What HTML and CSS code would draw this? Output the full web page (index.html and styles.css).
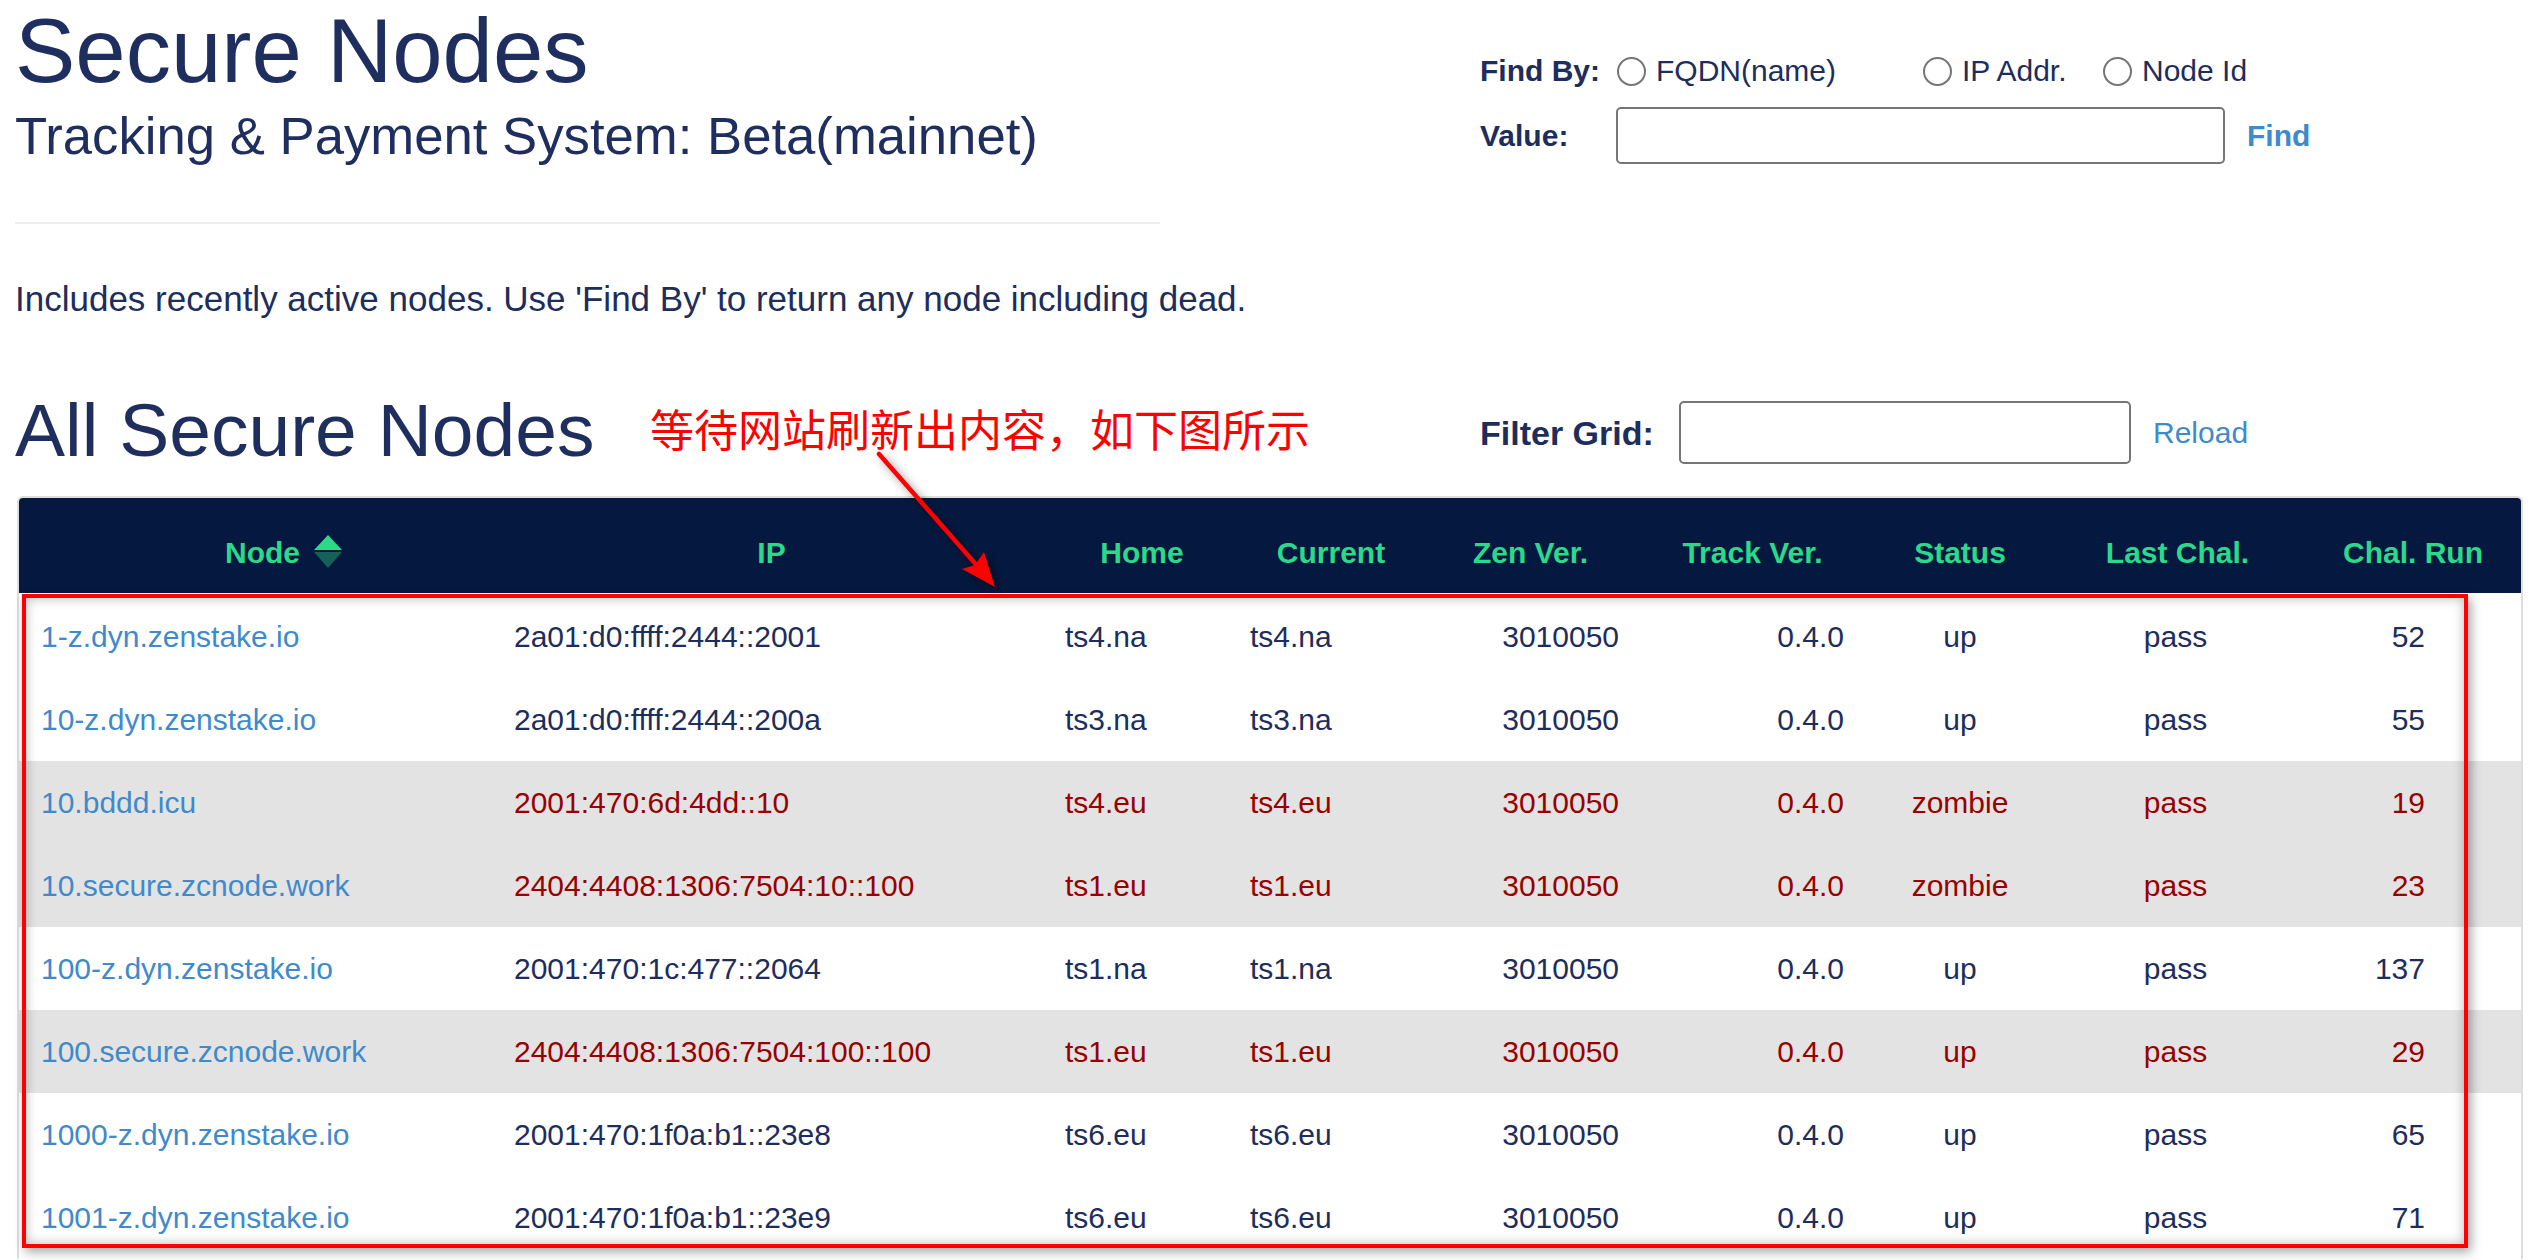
FILE: index.html
```html
<!DOCTYPE html>
<html lang="en">
<head>
<meta charset="utf-8">
<title>Secure Nodes</title>
<link rel="stylesheet" href="styles.css">
</head>
<body>
<div class="page">
  <div class="top">
    <div class="intro">
      <h1 class="title">Secure Nodes</h1>
      <h2 class="subtitle">Tracking &amp; Payment System: Beta(mainnet)</h2>
      <div class="rule"></div>
      <p class="note">Includes recently active nodes. Use 'Find By' to return any node including dead.</p>
    </div>
    <form class="finder">
      <span class="lbl">Find By:</span>
      <div class="opts">
        <label class="opt"><input class="radio" type="radio" name="by"><span>FQDN(name)</span></label>
        <label class="opt"><input class="radio" type="radio" name="by"><span>IP Addr.</span></label>
        <label class="opt"><input class="radio" type="radio" name="by"><span>Node Id</span></label>
      </div>
      <span class="lbl">Value:</span>
      <div class="value-row"><input class="txt txt-value" type="text"><a class="find" href="#">Find</a></div>
    </form>
  </div>

  <div class="section-head">
    <h2 class="section-title">All Secure Nodes</h2>
    <div class="filter">
      <span class="lbl lbl-filter">Filter Grid:</span>
      <input class="txt txt-filter" type="text">
      <a class="reload" href="#">Reload</a>
    </div>
  </div>

  <div class="grid">
    <div class="grid-head cols">
      <div class="hc hc-node"><span class="sortable">Node<svg class="sort-icon" width="28" height="33" viewBox="0 0 28 33"><polygon points="14,0 28,15 0,15" fill="#2bd98a"/><polygon points="0,17 28,17 14,33" fill="#17605a"/></svg></span></div>
      <div class="hc">IP</div>
      <div class="hc">Home</div>
      <div class="hc">Current</div>
      <div class="hc">Zen Ver.</div>
      <div class="hc">Track Ver.</div>
      <div class="hc">Status</div>
      <div class="hc">Last Chal.</div>
      <div class="hc">Chal. Run</div>
    </div>
    <div class="grid-body">
      <div class="row cols">
        <div class="c c-node"><a href="#">1-z.dyn.zenstake.io</a></div><div class="c c-ip">2a01:d0:ffff:2444::2001</div><div class="c c-home">ts4.na</div><div class="c c-cur">ts4.na</div><div class="c c-zen">3010050</div><div class="c c-trk">0.4.0</div><div class="c c-st">up</div><div class="c c-lc">pass</div><div class="c c-run">52</div>
      </div>
      <div class="row cols">
        <div class="c c-node"><a href="#">10-z.dyn.zenstake.io</a></div><div class="c c-ip">2a01:d0:ffff:2444::200a</div><div class="c c-home">ts3.na</div><div class="c c-cur">ts3.na</div><div class="c c-zen">3010050</div><div class="c c-trk">0.4.0</div><div class="c c-st">up</div><div class="c c-lc">pass</div><div class="c c-run">55</div>
      </div>
      <div class="row cols warn">
        <div class="c c-node"><a href="#">10.bddd.icu</a></div><div class="c c-ip">2001:470:6d:4dd::10</div><div class="c c-home">ts4.eu</div><div class="c c-cur">ts4.eu</div><div class="c c-zen">3010050</div><div class="c c-trk">0.4.0</div><div class="c c-st">zombie</div><div class="c c-lc">pass</div><div class="c c-run">19</div>
      </div>
      <div class="row cols warn">
        <div class="c c-node"><a href="#">10.secure.zcnode.work</a></div><div class="c c-ip">2404:4408:1306:7504:10::100</div><div class="c c-home">ts1.eu</div><div class="c c-cur">ts1.eu</div><div class="c c-zen">3010050</div><div class="c c-trk">0.4.0</div><div class="c c-st">zombie</div><div class="c c-lc">pass</div><div class="c c-run">23</div>
      </div>
      <div class="row cols">
        <div class="c c-node"><a href="#">100-z.dyn.zenstake.io</a></div><div class="c c-ip">2001:470:1c:477::2064</div><div class="c c-home">ts1.na</div><div class="c c-cur">ts1.na</div><div class="c c-zen">3010050</div><div class="c c-trk">0.4.0</div><div class="c c-st">up</div><div class="c c-lc">pass</div><div class="c c-run">137</div>
      </div>
      <div class="row cols warn">
        <div class="c c-node"><a href="#">100.secure.zcnode.work</a></div><div class="c c-ip">2404:4408:1306:7504:100::100</div><div class="c c-home">ts1.eu</div><div class="c c-cur">ts1.eu</div><div class="c c-zen">3010050</div><div class="c c-trk">0.4.0</div><div class="c c-st">up</div><div class="c c-lc">pass</div><div class="c c-run">29</div>
      </div>
      <div class="row cols">
        <div class="c c-node"><a href="#">1000-z.dyn.zenstake.io</a></div><div class="c c-ip">2001:470:1f0a:b1::23e8</div><div class="c c-home">ts6.eu</div><div class="c c-cur">ts6.eu</div><div class="c c-zen">3010050</div><div class="c c-trk">0.4.0</div><div class="c c-st">up</div><div class="c c-lc">pass</div><div class="c c-run">65</div>
      </div>
      <div class="row cols">
        <div class="c c-node"><a href="#">1001-z.dyn.zenstake.io</a></div><div class="c c-ip">2001:470:1f0a:b1::23e9</div><div class="c c-home">ts6.eu</div><div class="c c-cur">ts6.eu</div><div class="c c-zen">3010050</div><div class="c c-trk">0.4.0</div><div class="c c-st">up</div><div class="c c-lc">pass</div><div class="c c-run">71</div>
      </div>
    </div>
  </div>
</div>

<div class="annot">等待网站刷新出内容，如下图所示</div>
<svg class="arrow" width="160" height="160" viewBox="860 440 160 160">
  <line x1="879" y1="454" x2="980" y2="569" stroke="#ff0000" stroke-width="4.5" stroke-linecap="round"/>
  <polygon points="995,587 962,569 975,565 984,552" fill="#ff0000"/>
</svg>
<div class="highlight"></div>
</body>
</html>
```

FILE: styles.css
```css
html, body {
  margin: 0;
  padding: 0;
  height: 1260px;
  overflow: hidden;
  background: #ffffff;
}

body {
  font-family: "Liberation Sans", Arial, sans-serif;
  color: #1d2d5c;
  position: relative;
}

.page {
  padding: 6px 16px 0 15px;
}

/* ---------- top ---------- */
.top {
  display: grid;
  grid-template-columns: 1465px 1fr;
  align-items: start;
}

.title {
  margin: 0;
  font-size: 90.5px;
  line-height: 90px;
  font-weight: 400;
  color: #1e2e5e;
}

.subtitle {
  margin: 14px 0 0;
  font-size: 52.7px;
  line-height: 52px;
  font-weight: 400;
  color: #1e2e5e;
}

.rule {
  margin-top: 60px;
  width: 1145px;
  height: 2px;
  background: #eeeeee;
}

.note {
  margin: 57px 0 0;
  font-size: 35px;
  line-height: 35px;
  color: #1d2d5c;
}

.finder {
  margin: 0;
  padding-top: 50px;
  display: grid;
  grid-template-columns: 136px auto;
  grid-template-rows: 30px 57px;
  row-gap: 21px;
  align-items: center;
}

.lbl {
  font-size: 30px;
  line-height: 30px;
  font-weight: 700;
  color: #1d2d5c;
}

.opts {
  display: grid;
  grid-template-columns: 306px 180px auto;
  align-items: center;
}

.opt {
  display: flex;
  align-items: center;
  font-size: 30px;
  line-height: 30px;
  color: #1d2d5c;
}

.radio {
  appearance: none;
  -webkit-appearance: none;
  width: 29px;
  height: 29px;
  margin: 0 10px 0 1px;
  border: 2px solid #767676;
  border-radius: 50%;
  background: #ffffff;
  box-sizing: border-box;
}

.value-row {
  display: flex;
  align-items: center;
}

.txt {
  box-sizing: border-box;
  border: 2px solid #767676;
  border-radius: 5px;
  background: #ffffff;
  margin: 0;
  padding: 0 10px;
  font-family: "Liberation Sans", Arial, sans-serif;
  font-size: 30px;
}

.txt-value {
  width: 609px;
  height: 57px;
}

.find {
  margin-left: 22px;
  font-size: 30px;
  line-height: 30px;
  font-weight: 700;
  color: #3e8acc;
  text-decoration: none;
}

/* ---------- section head ---------- */
.section-head {
  margin-top: 77px;
  display: grid;
  grid-template-columns: 1465px 1fr;
  align-items: start;
}

.section-title {
  margin: 0;
  font-size: 75px;
  line-height: 75px;
  font-weight: 400;
  color: #1e2e5e;
}

.filter {
  margin-top: 8px;
  height: 63px;
  display: flex;
  align-items: center;
}

.lbl-filter {
  width: 199px;
  font-size: 34px;
  line-height: 34px;
}

.txt-filter {
  width: 452px;
  height: 63px;
}

.reload {
  margin-left: 22px;
  font-size: 30px;
  line-height: 30px;
  color: #3e8acc;
  text-decoration: none;
}

/* ---------- grid ---------- */
.grid {
  margin: 28px 0 0 2px;
  height: 763px;
  overflow: hidden;
  border: 2px solid #dedede;
  border-bottom: none;
  border-radius: 6px 6px 0 0;
  box-sizing: border-box;
}

.cols {
  display: grid;
  grid-template-columns: 476px 553px 188px 190px 209px 235px 180px 255px 216px;
}

.grid-head {
  height: 95px;
  background: #05183f;
  border-bottom: 2px solid #ffffff;
  box-sizing: content-box;
}

.hc {
  padding-top: 40px;
  text-align: center;
  font-size: 30px;
  line-height: 30px;
  font-weight: 700;
  color: #2bd98a;
}

.hc-node {
  padding-left: 11px;
}

.sortable {
  position: relative;
  display: inline-block;
}

.sort-icon {
  position: absolute;
  left: calc(100% + 14px);
  top: -3px;
}

.row {
  height: 83px;
  align-items: center;
  font-size: 30px;
  line-height: 30px;
  color: #1d2d5c;
  background: #ffffff;
}

.row.warn {
  background: #e3e3e3;
  color: #990000;
}

.c {
  white-space: nowrap;
}

.c a {
  color: #3e8acc;
  text-decoration: none;
}

.c-node { padding-left: 22px; }
.c-ip   { padding-left: 19px; }
.c-home { padding-left: 17px; }
.c-cur  { padding-left: 14px; }
.c-zen  { text-align: right; padding-right: 16px; }
.c-trk  { text-align: right; padding-right: 26px; }
.c-st   { text-align: center; }
.c-lc   { text-align: center; padding-right: 4px; }
.c-run  { text-align: right; padding-right: 96px; }

/* ---------- annotation overlays ---------- */
.annot {
  position: absolute;
  left: 650px;
  top: 406px;
  font-family: "Noto Sans CJK SC", "Liberation Sans", sans-serif;
  font-size: 44px;
  line-height: 44px;
  color: #ff0000;
  white-space: nowrap;
}

.arrow {
  position: absolute;
  left: 860px;
  top: 440px;
  overflow: visible;
  filter: drop-shadow(4px 4px 4px rgba(0, 0, 0, 0.45));
}

.highlight {
  position: absolute;
  left: 22px;
  top: 594px;
  width: 2446px;
  height: 654px;
  box-sizing: border-box;
  border: 4px solid #ff0000;
  box-shadow: 3px 4px 10px rgba(0, 0, 0, 0.35), inset 0 0 12px rgba(0, 0, 0, 0.28);
  pointer-events: none;
}
```
